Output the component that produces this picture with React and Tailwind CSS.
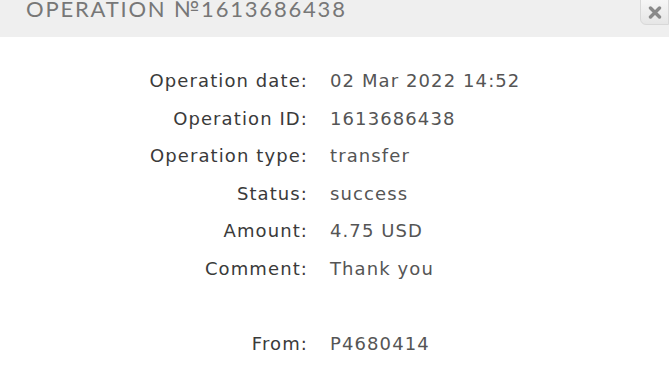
import React from "react";

const rows = [
  ["Operation date:", "02 Mar 2022 14:52"],
  ["Operation ID:", "1613686438"],
  ["Operation type:", "transfer"],
  ["Status:", "success"],
  ["Amount:", "4.75 USD"],
  ["Comment:", "Thank you"],
  ["", ""],
  ["From:", "P4680414"],
];

export default function App() {
  return (
    <div className="relative w-[669px] h-[391px] overflow-hidden bg-white">
      <div className="h-[37px] bg-[#efefef] flex items-start pl-[26px]">
        <div
          className="-mt-[4px] text-[22px] leading-[26px] tracking-[1.8px] text-[#777777]"
          style={{ fontFamily: '"Lato", "DejaVu Sans", sans-serif' }}
        >
          OPERATION №1613686438
        </div>
      </div>
      <div className="absolute top-[-1px] right-0 w-[29px] h-[26px] border border-[#d8d8d8] rounded-bl-[6px] bg-gradient-to-b from-[#f6f6f6] to-[#e6e6e6] flex items-center justify-center">
        <svg width="14" height="13" viewBox="0 0 14 13">
          <path d="M2.5 2 L11.5 11 M11.5 2 L2.5 11" stroke="#8a8a8a" strokeWidth="3.4" strokeLinecap="round" />
        </svg>
      </div>
      <div
        className="grid grid-cols-[308px_1fr] gap-x-[22px] pt-[25px] text-[18px] tracking-[1.1px]"
        style={{ fontFamily: '"DejaVu Sans", sans-serif' }}
      >
        {rows.map(([l, v], i) => (
          <React.Fragment key={i}>
            <div className="h-[37.5px] flex items-center justify-end text-[#3a3a3a]">{l}</div>
            <div className="h-[37.5px] flex items-center text-[#555555]">{v}</div>
          </React.Fragment>
        ))}
      </div>
    </div>
  );
}
